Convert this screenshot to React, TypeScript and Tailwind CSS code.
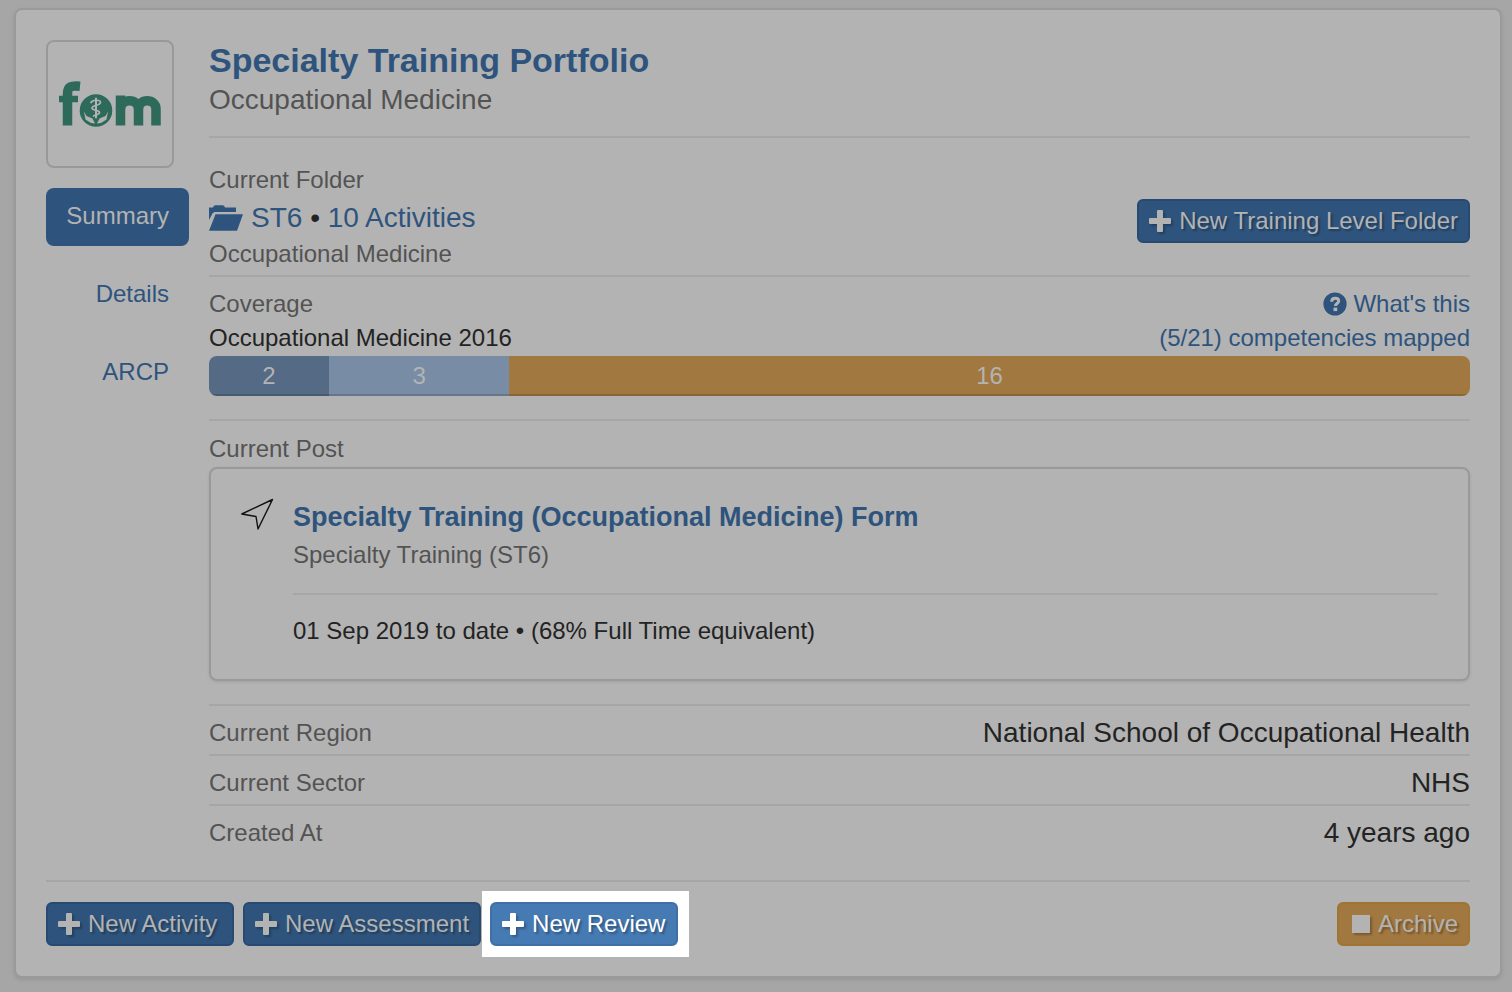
import type { ReactNode } from "react";
import clsx from "clsx";

const tabs = ["Summary", "Details", "ARCP"];

const coverage = [
  { count: 2, color: "bg-[#546a85]" },
  { count: 3, color: "bg-[#788ca6]" },
  { count: 16, color: "bg-[#a1783f]" },
];

const details = [
  { label: "Current Region", value: "National School of Occupational Health" },
  { label: "Current Sector", value: "NHS" },
  { label: "Created At", value: "4 years ago" },
];

const total = coverage.reduce((sum, item) => sum + item.count, 0);

function PlusIcon() {
  return (
    <svg
      viewBox="0 0 22 22"
      className="size-[22px] shrink-0 drop-shadow-[2px_2px_1px_rgba(0,0,0,0.25)]"
      fill="currentColor"
      aria-hidden="true"
    >
      <path d="M9 0h4a1 1 0 0 1 1 1v7h7a1 1 0 0 1 1 1v4a1 1 0 0 1-1 1h-7v7a1 1 0 0 1-1 1H9a1 1 0 0 1-1-1v-7H1a1 1 0 0 1-1-1V9a1 1 0 0 1 1-1h7V1a1 1 0 0 1 1-1z" />
    </svg>
  );
}

function FolderIcon() {
  return (
    <svg viewBox="0 0 34 26" className="h-[26px] w-[34px] shrink-0" fill="currentColor" aria-hidden="true">
      <path d="M0 2.4h4Q4.500.3 6.500.3h7q2 0 2.500 2.100h11V7H5.500L3.600 8.300 0 15z" />
      <path d="M6.500 9.300H34L28 25.700H0z" />
    </svg>
  );
}

function QuestionIcon() {
  return (
    <svg viewBox="0 0 24 24" className="size-6 shrink-0" aria-hidden="true">
      <circle cx="12" cy="12" r="11.600" fill="currentColor" />
      <path
        d="M8.700 9.700c0-2.300 1.300-3.500 3.500-3.500 2.100 0 3.500 1.100 3.500 2.800 0 2.500-3.300 2.400-3.300 5"
        fill="none"
        stroke="#b3b3b3"
        strokeWidth="3"
      />
      <path d="M10.500 15.600h3.700v3.500h-3.700z" fill="#b3b3b3" />
    </svg>
  );
}

function ArrowIcon() {
  return (
    <svg viewBox="0 0 34 34" className="size-[34px] shrink-0" fill="none" stroke="#111" strokeWidth="1.400" aria-hidden="true">
      <path d="M.8 17 31.500 2.500 17 32 15 19.500z" strokeLinejoin="round" />
    </svg>
  );
}

function Logo() {
  return (
    <svg viewBox="0 0 104 46" className="w-[104px]" role="img" aria-label="fom">
      <g fill="none" stroke="#2d6a59" strokeWidth="9.500">
        <path d="M9.500 44.500V13C9.500 5.500 13 4.300 22 5.200" />
        <path d="M1 18h19" strokeWidth="6.500" />
        <path d="M62.500 44.500V14.500" />
        <path d="M62.500 28c0-11 18-11 18 0v16.500" />
        <path d="M80.500 28c0-11 17.500-11 17.500 0v16.500" />
      </g>
      <circle cx="38" cy="29.500" r="16.300" fill="#2d6a59" />
      <g fill="none" stroke="#b3b3b3" strokeLinecap="round">
        <path d="M38 17.500v19" strokeWidth="2" />
        <path d="M33 21.500c1.500-3 9.500-3 9.500 0s-8.500 2.500-8.500 5.500 7.500 1.500 7.500 4.500c0 2.500-4.500 2-6 3.500" strokeWidth="1.700" />
      </g>
      <g fill="#b3b3b3">
        <path d="M26 30.500l2.500 4.500 6 2.500 2.500 5-4-.5-5.500-3.500z" />
        <path d="M50 30.500l-2.500 4.500-6 2.500-2.500 5 4-.5 5.500-3.500z" />
      </g>
    </svg>
  );
}

function ActionButton({ children, bright }: { children: ReactNode; bright?: boolean }) {
  return (
    <button
      type="button"
      className={clsx(
        "flex h-11 min-w-[188px] items-center gap-2 rounded-md border-2 px-2.5 text-2xl whitespace-nowrap text-shadow-[2px_2px_2px_rgba(0,0,0,0.3)]",
        bright
          ? "relative border-[#4070a6] bg-[#467ab3] text-white"
          : "border-[#294a70] bg-[#2e547d] text-[#b3b3b3]"
      )}
    >
      <PlusIcon />
      {children}
    </button>
  );
}

export default function App() {
  return (
    <div className="min-h-screen bg-[#a6a6a6] pt-2 pr-2.5 pb-3.5 pl-3.5 font-['Liberation_Sans',Arial,sans-serif] text-2xl text-[#232323]">
      <main className="rounded-lg border-2 border-[#9a9a9a] bg-[#b3b3b3] p-[30px] shadow-[0_2px_4px_rgba(0,0,0,0.1)]">
        <div className="flex gap-5">
          <aside className="w-[143px] shrink-0">
            <div className="flex size-32 items-center justify-center rounded-lg border-2 border-[#999]">
              <Logo />
            </div>
            <nav className="mt-5 flex flex-col gap-5">
              {tabs.map((tab, i) => (
                <a
                  key={tab}
                  href="#"
                  className={clsx(
                    "flex h-[58px] items-center justify-end rounded-lg px-5 pb-0.5",
                    i === 0 ? "bg-[#2e547d] text-[#b3b3b3]" : "text-[#2e547d]"
                  )}
                >
                  {tab}
                </a>
              ))}
            </nav>
          </aside>

          <div className="min-w-0 flex-1">
            <header className="border-b-2 border-[#a6a6a6] pb-4">
              <h1 className="text-[34px] leading-10 font-bold text-[#2e547d]">
                Specialty Training Portfolio
              </h1>
              <p className="text-[28px] leading-10 text-[#535353]">Occupational Medicine</p>
            </header>

            <section className="flex items-center justify-between border-b-2 border-[#a6a6a6] pt-6">
              <div>
                <h2 className="leading-9 text-[#535353]">Current Folder</h2>
                <p className="flex h-10 items-center gap-2 text-[28px] text-[#2e547d]">
                  <FolderIcon />
                  <span>
                    <a href="#">ST6</a> <span className="text-[#232323]">•</span>{" "}
                    <a href="#">10 Activities</a>
                  </span>
                </p>
                <p className="pb-[5px] leading-8 text-[#535353]">Occupational Medicine</p>
              </div>
              <div className="pt-1">
                <ActionButton>New Training Level Folder</ActionButton>
              </div>
            </section>

            <section className="border-b-2 border-[#a6a6a6] pt-2.5 pb-[23px]">
              <div className="flex justify-between leading-[34px]">
                <h2 className="text-[#535353]">Coverage</h2>
                <a href="#" className="flex items-center gap-1.5 text-[#2e547d]">
                  <QuestionIcon />
                  What's this
                </a>
              </div>
              <div className="flex justify-between leading-[34px]">
                <p>Occupational Medicine 2016</p>
                <a href="#" className="text-[#2e547d]">(5/21) competencies mapped</a>
              </div>
              <div className="mt-px flex h-10 overflow-hidden rounded-lg">
                {coverage.map((item) => (
                  <div
                    key={item.count}
                    className={clsx(
                      "flex items-center justify-center text-[#b3b3b3] shadow-[inset_0_-2px_0_rgba(0,0,0,0.15)]",
                      item.color
                    )}
                    style={{ width: `${(item.count / total) * 100}%` }}
                  >
                    {item.count}
                  </div>
                ))}
              </div>
            </section>

            <section className="pt-2.5 pb-[23px]">
              <h2 className="leading-9 text-[#535353]">Current Post</h2>
              <div className="flex gap-[18px] rounded-lg border-2 border-[#999] px-[30px] pt-7 pb-8 shadow-[0_1px_3px_rgba(0,0,0,0.1)]">
                <ArrowIcon />
                <div className="flex-1">
                  <h3 className="text-[27px] leading-10 font-bold text-[#2e547d]">
                    Specialty Training (Occupational Medicine) Form
                  </h3>
                  <p className="border-b-2 border-[#a6a6a6] pb-5 leading-9 text-[#535353]">
                    Specialty Training (ST6)
                  </p>
                  <p className="pt-5 leading-8">01 Sep 2019 to date • (68% Full Time equivalent)</p>
                </div>
              </div>
            </section>

            <dl>
              {details.map((row) => (
                <div
                  key={row.label}
                  className="flex h-[50px] items-center justify-between border-t-2 border-[#a6a6a6] pt-1.5"
                >
                  <dt className="text-[#535353]">{row.label}</dt>
                  <dd className="text-[28px]">{row.value}</dd>
                </div>
              ))}
            </dl>
          </div>
        </div>

        <footer className="mt-[26px] flex justify-between border-t-2 border-[#a6a6a6] pt-5">
          <div className="flex gap-[9px]">
            <ActionButton>New Activity</ActionButton>
            <ActionButton>New Assessment</ActionButton>
            <div className="relative">
              <span className="absolute -inset-y-[11px] -right-[11px] -left-2 bg-white" />
              <ActionButton bright>New Review</ActionButton>
            </div>
          </div>
          <button
            type="button"
            className="flex h-11 items-center gap-2 rounded-md border-2 border-[#a07432] bg-[#a1783f] pr-2.5 pl-[13px] text-[#b3b3b3] text-shadow-[2px_2px_2px_rgba(0,0,0,0.3)]"
          >
            <span className="size-[18px] bg-current shadow-[2px_2px_2px_rgba(0,0,0,0.25)]" />
            Archive
          </button>
        </footer>
      </main>
    </div>
  );
}
